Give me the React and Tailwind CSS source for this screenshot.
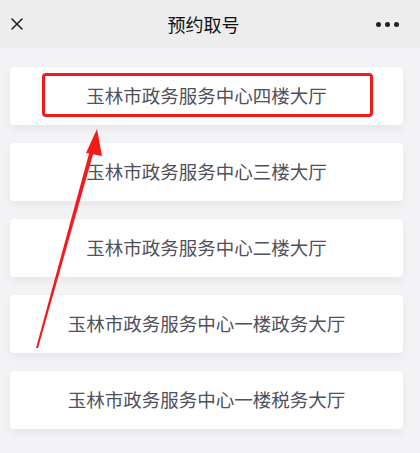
import { X } from "lucide-react";

const halls = [
  "玉林市政务服务中心四楼大厅",
  "玉林市政务服务中心三楼大厅",
  "玉林市政务服务中心二楼大厅",
  "玉林市政务服务中心一楼政务大厅",
  "玉林市政务服务中心一楼税务大厅",
];

function App() {
  return (
    <div
      className="relative w-[420px] h-[453px] overflow-hidden bg-[#f3f3f5]"
      style={{ fontFamily: '"Noto Sans CJK SC", "Noto Sans", sans-serif' }}
    >
      {/* top bar */}
      <div className="h-[48px] bg-[#ededed] flex items-center justify-between pl-[7px] pr-[21px]">
        <X size={20} strokeWidth={1.8} className="text-[#1a1a1a]" />
        <h1 className="text-[18px] text-[#111] pl-[4px]">预约取号</h1>
        <div className="flex gap-[4px]">
          <span className="w-[5px] h-[5px] rounded-full bg-[#222]"></span>
          <span className="w-[5px] h-[5px] rounded-full bg-[#222]"></span>
          <span className="w-[5px] h-[5px] rounded-full bg-[#222]"></span>
        </div>
      </div>

      <div className="flex flex-col gap-[18px] pt-[19px] pl-[10px] pr-[17px]">
        {halls.map((name) => (
          <div
            key={name}
            className="h-[58px] bg-white rounded-[4px] shadow-[0_4px_8px_rgba(0,0,0,0.05)] flex items-center justify-center text-[18.5px] text-[#50505a]"
          >
            {name}
          </div>
        ))}
      </div>

      {/* annotation: red box + arrow */}
      <div className="absolute left-[42px] top-[73px] w-[331px] h-[44px] border-[3px] border-[#f21b1b] rounded-[4px]"></div>
      <svg className="absolute left-0 top-0" width="420" height="453" viewBox="0 0 420 453">
        <path d="M36 348 L90 150 L94 151 L38 348 Z" fill="#f21b1b" />
        <path d="M97 129 L86 153 L102 156 Z" fill="#f21b1b" />
      </svg>
    </div>
  );
}

export default App;
